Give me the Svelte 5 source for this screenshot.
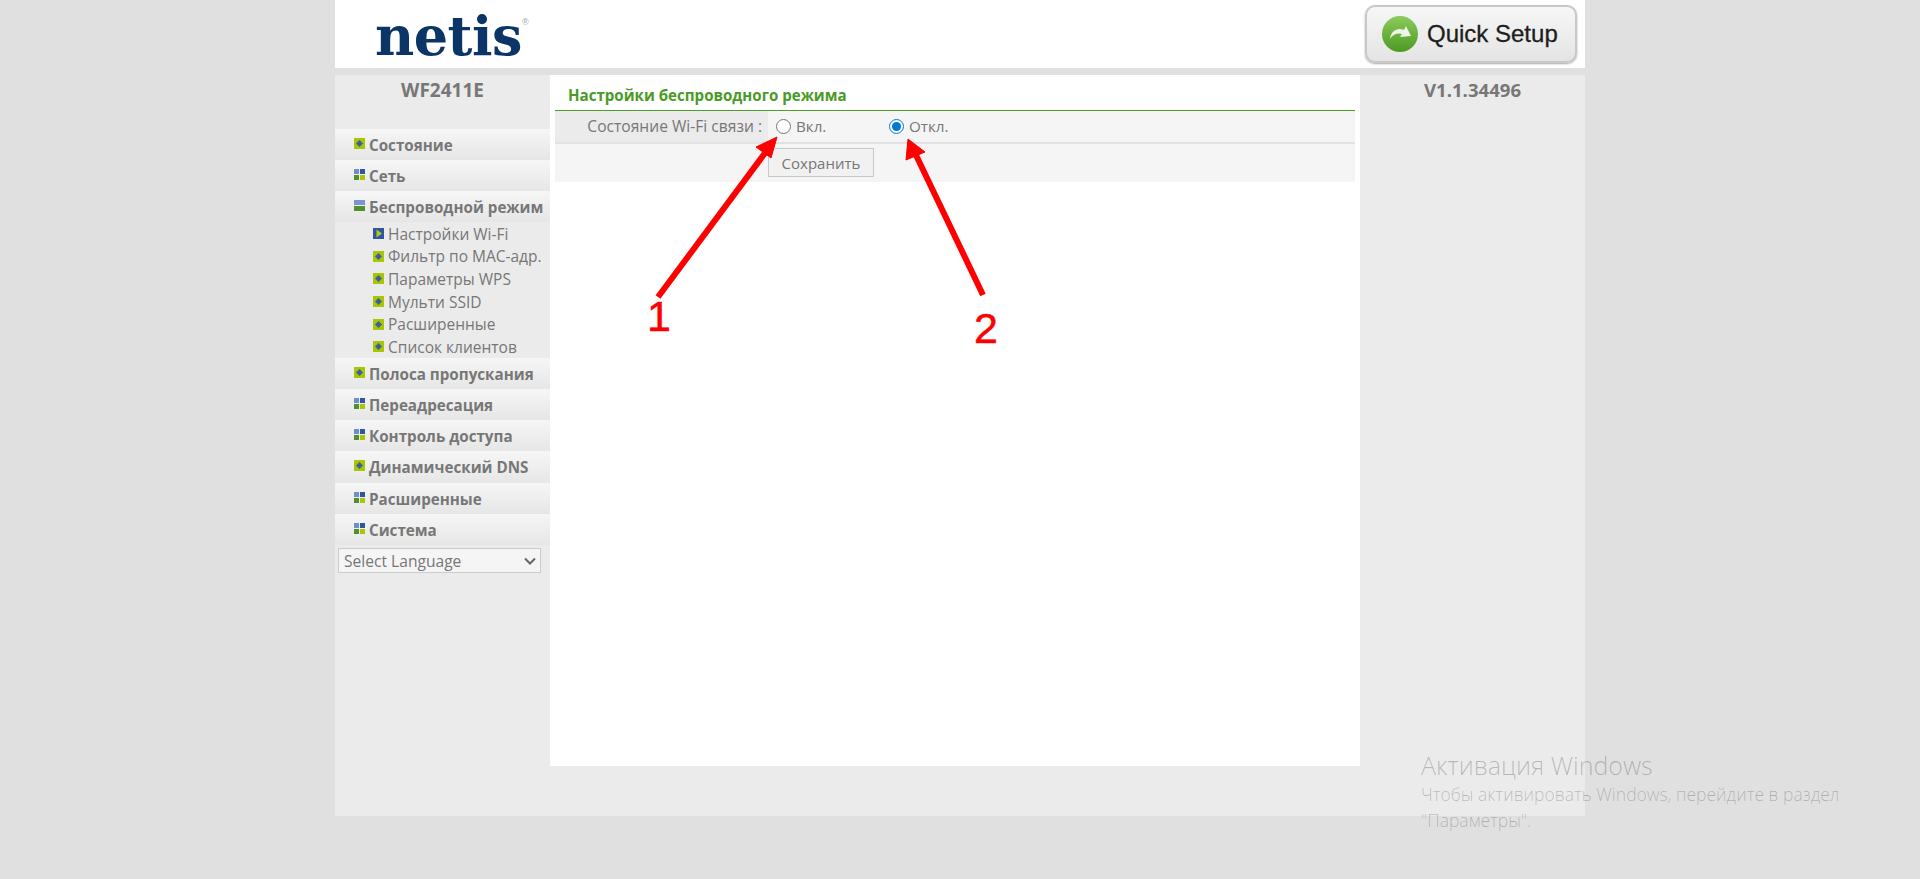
<script>
  const menuTop = [
    { label: 'Состояние', icon: 'dot' },
    { label: 'Сеть', icon: 'grid' },
    { label: 'Беспроводной режим', icon: 'bars' }
  ];
  const subs = [
    { label: 'Настройки Wi-Fi', icon: 'play' },
    { label: 'Фильтр по MAC-адр.', icon: 'dot' },
    { label: 'Параметры WPS', icon: 'dot' },
    { label: 'Мульти SSID', icon: 'dot' },
    { label: 'Расширенные', icon: 'dot' },
    { label: 'Список клиентов', icon: 'dot' }
  ];
  const menuBottom = [
    { label: 'Полоса пропускания', icon: 'dot' },
    { label: 'Переадресация', icon: 'grid' },
    { label: 'Контроль доступа', icon: 'grid' },
    { label: 'Динамический DNS', icon: 'dot' },
    { label: 'Расширенные', icon: 'grid' },
    { label: 'Система', icon: 'grid' }
  ];
</script>

{#snippet icon(kind)}
  <svg class="ico" viewBox="0 0 11 11" width="11" height="11" aria-hidden="true">
    {#if kind === 'dot'}
      <rect width="11" height="11" fill="#a9c600" />
      <path d="M5.5 2 9 5.500 5.500 9 2 5.500Z" fill="#3a5fa8" />
    {:else if kind === 'grid'}
      <rect width="5" height="5" fill="#6f8fcb" />
      <rect x="6" width="5" height="5" fill="#2f56a6" />
      <rect y="6" width="5" height="5" fill="#4f9130" />
      <rect x="6" y="6" width="5" height="5" fill="#a9c600" />
    {:else if kind === 'bars'}
      <rect width="11" height="5" fill="#7c94cf" />
      <rect y="6" width="11" height="5" fill="#4f9130" />
    {:else}
      <rect width="11" height="11" fill="#2f56a6" />
      <path d="M3.5 1.500 9 5.500 3.500 9.500Z" fill="#b4cc10" />
    {/if}
  </svg>
{/snippet}

{#snippet top(item)}
  <div class="top">
    {@render icon(item.icon)}
    <span>{item.label}</span>
  </div>
{/snippet}

<div class="page">
  <div class="wrap">
    <header>
      <div class="logo">netis<sup>®</sup></div>
      <div class="quick">
        <svg width="38" height="38" viewBox="0 0 38 38" aria-hidden="true">
          <defs>
            <linearGradient id="gr" x1="0" y1="0" x2="0" y2="1">
              <stop offset="0" stop-color="#8ccb5e" />
              <stop offset="1" stop-color="#4c9a22" />
            </linearGradient>
          </defs>
          <circle cx="19" cy="19" r="18" fill="url(#gr)" />
          <path d="M9 24C10 15 17 12 23 15L25 11 30 21 19 22 21 19C17 17.500 12 19 9 24Z" fill="#eef6e6" />
        </svg>
        <span>Quick Setup</span>
      </div>
    </header>

    <div class="body">
      <aside class="left">
        <div class="model">WF2411E</div>
        {#each menuTop as item}{@render top(item)}{/each}
        <div class="subs">
          {#each subs as s}
            <div class="sub">{@render icon(s.icon)}<span>{s.label}</span></div>
          {/each}
        </div>
        {#each menuBottom as item}{@render top(item)}{/each}
        <div class="langbox">
          <select class="lang"><option>Select Language</option></select>
          <svg class="chev" width="12" height="8" viewBox="0 0 12 8" aria-hidden="true">
            <path d="M1 1.500 6 6.500 11 1.500" fill="none" stroke="#666" stroke-width="2" />
          </svg>
        </div>
      </aside>

      <main>
        <h1>Настройки беспроводного режима</h1>
        <div class="row first">
          <div class="label">Состояние Wi-Fi связи :</div>
          <div class="val">
            <label class="opt on"><input type="radio" name="wifi" />Вкл.</label>
            <label class="opt"><input type="radio" name="wifi" checked />Откл.</label>
          </div>
        </div>
        <div class="row second">
          <button>Сохранить</button>
        </div>
      </main>

      <aside class="right">V1.1.34496</aside>
    </div>
  </div>

  <svg class="arrows" width="1920" height="879" aria-hidden="true">
    <g stroke="#fe0000" stroke-width="6" fill="#fe0000">
      <line x1="658" y1="297" x2="768" y2="149" />
      <path d="M777 137 771 158 756 147Z" stroke-width="1" />
      <line x1="983" y1="295" x2="915" y2="153" />
      <path d="M908 139 925 152 906 160Z" stroke-width="1" />
    </g>
  </svg>
  <div class="num n1">1</div>
  <div class="num n2">2</div>

  <div class="activate">
    <div class="a1">Активация Windows</div>
    <div class="a2">Чтобы активировать Windows, перейдите в раздел<br />"Параметры".</div>
  </div>
</div>

<style>
  :global(body) {
    margin: 0;
    background: #e0e0e0;
    font-family: "Open Sans", sans-serif;
  }
  .page {
    position: relative;
    height: 879px;
    overflow: hidden;
    color: #777;
  }
  .wrap {
    width: 1250px;
    margin-left: 335px;
  }
  header {
    height: 68px;
    background: #fff;
    display: flex;
    justify-content: space-between;
    align-items: flex-start;
    margin-bottom: 7px;
  }
  .logo {
    margin: 6px 0 0 40px;
    font-family: "DejaVu Serif", serif;
    font-weight: 700;
    font-size: 54px;
    line-height: 60px;
    letter-spacing: -0.5px;
    color: #0c3567;
  }
  .logo sup {
    font-family: "Liberation Sans", sans-serif;
    font-size: 9px;
    font-weight: 400;
    line-height: 0;
    letter-spacing: 0;
    color: #9aa5b0;
    vertical-align: 30px;
  }
  .quick {
    box-sizing: border-box;
    width: 212px;
    height: 58px;
    margin: 5px 8px 0 0;
    padding-left: 14px;
    display: flex;
    align-items: center;
    gap: 8px;
    border: 2px solid #c8c8c8;
    border-radius: 10px;
    background: linear-gradient(#f7f7f7, #e4e4e4);
    box-shadow: 0 1px 2px #aaa;
    font-family: "Liberation Sans", sans-serif;
    font-size: 24px;
    color: #1d1d1d;
    -webkit-text-stroke: 0.3px #1d1d1d;
    white-space: nowrap;
  }
  .quick svg { flex: none; }
  .body {
    height: 741px;
    background: #ebebeb;
    display: flex;
    align-items: flex-start;
  }
  .left { width: 215px; flex: none; }
  .model {
    height: 54px;
    text-align: center;
    font-weight: 700;
    font-size: 19px;
    line-height: 31px;
  }
  .top {
    height: 31px;
    box-sizing: border-box;
    padding-left: 19px;
    display: flex;
    align-items: center;
    gap: 4px;
    background: linear-gradient(#f6f6f6, #e6e6e6);
    font-weight: 700;
    font-size: 15.200px;
    white-space: nowrap;
  }
  .top .ico { margin-top: -3px; }
  .top:nth-last-of-type(4) { height: 32px; }
  .subs { height: 136px; box-sizing: border-box; padding-top: 0.5px; }
  .sub {
    height: 22.580px;
    padding-left: 38px;
    display: flex;
    align-items: center;
    gap: 4px;
    font-size: 15.500px;
    white-space: nowrap;
  }
  .ico { flex: none; display: block; }
  .langbox { position: relative; width: 203px; height: 25px; margin: 3px 0 0 3px; }
  .lang {
    display: block;
    width: 203px;
    height: 25px;
    padding: 0 5px;
    appearance: none;
    border: 1px solid #ccc;
    border-radius: 0;
    background-color: #f5f5f5;
    color: #777;
    font-family: "Open Sans", sans-serif;
    font-size: 15.600px;
  }
  .chev { position: absolute; right: 5px; top: 9px; }
  main {
    box-sizing: border-box;
    width: 810px;
    height: 691px;
    flex: none;
    padding: 0 5px;
    background: #fff;
  }
  h1 {
    margin: 0;
    height: 36px;
    box-sizing: border-box;
    padding: 10px 0 0 13px;
    border-bottom: 1px solid #4f9e25;
    font-size: 15.100px;
    line-height: 20px;
    font-weight: 700;
    color: #4a9a26;
  }
  .row { display: flex; background: #f5f5f5; }
  .first { height: 33px; box-sizing: border-box; border-bottom: 2px solid #e2e2e2; }
  .label {
    box-sizing: border-box;
    width: 213px;
    padding-right: 6px;
    background: #ebebeb;
    text-align: right;
    font-size: 15.600px;
    line-height: 30px;
  }
  .val { display: flex; font-size: 15.200px; line-height: 29px; }
  .opt { display: flex; align-items: center; width: 114px; margin-left: 8px; }
  .opt + .opt { margin-left: -1px; width: 100px; }
  .opt input { width: 15px; height: 15px; margin: 0 5px 0 0; flex: none; accent-color: #0078d7; }
  .second { height: 38px; padding: 4px 0 0 213px; box-sizing: border-box; }
  button {
    box-sizing: border-box;
    width: 106px;
    height: 29px;
    padding: 0;
    border: 1px solid #c8c8c8;
    background: #f1f1f1;
    color: #777;
    font-family: "Open Sans", sans-serif;
    font-size: 15px;
  }
  .right {
    flex: 1;
    text-align: center;
    font-weight: 700;
    font-size: 18.600px;
    line-height: 30px;
  }
  .arrows { position: absolute; left: 0; top: 0; pointer-events: none; }
  .num {
    position: absolute;
    font-family: "Liberation Sans", sans-serif;
    font-size: 43px;
    line-height: 43px;
    color: #fe0000;
    -webkit-text-stroke: 0.5px #fe0000;
  }
  .n1 { left: 647px; top: 295px; }
  .n2 { left: 974px; top: 307px; }
  .activate {
    position: absolute;
    left: 1421px;
    top: 749px;
    font-weight: 300;
    color: rgba(0, 0, 0, 0.22);
    white-space: nowrap;
  }
  .a1 { font-size: 25px; line-height: 32px; }
  .a2 { font-size: 17.500px; line-height: 26px; }
</style>
